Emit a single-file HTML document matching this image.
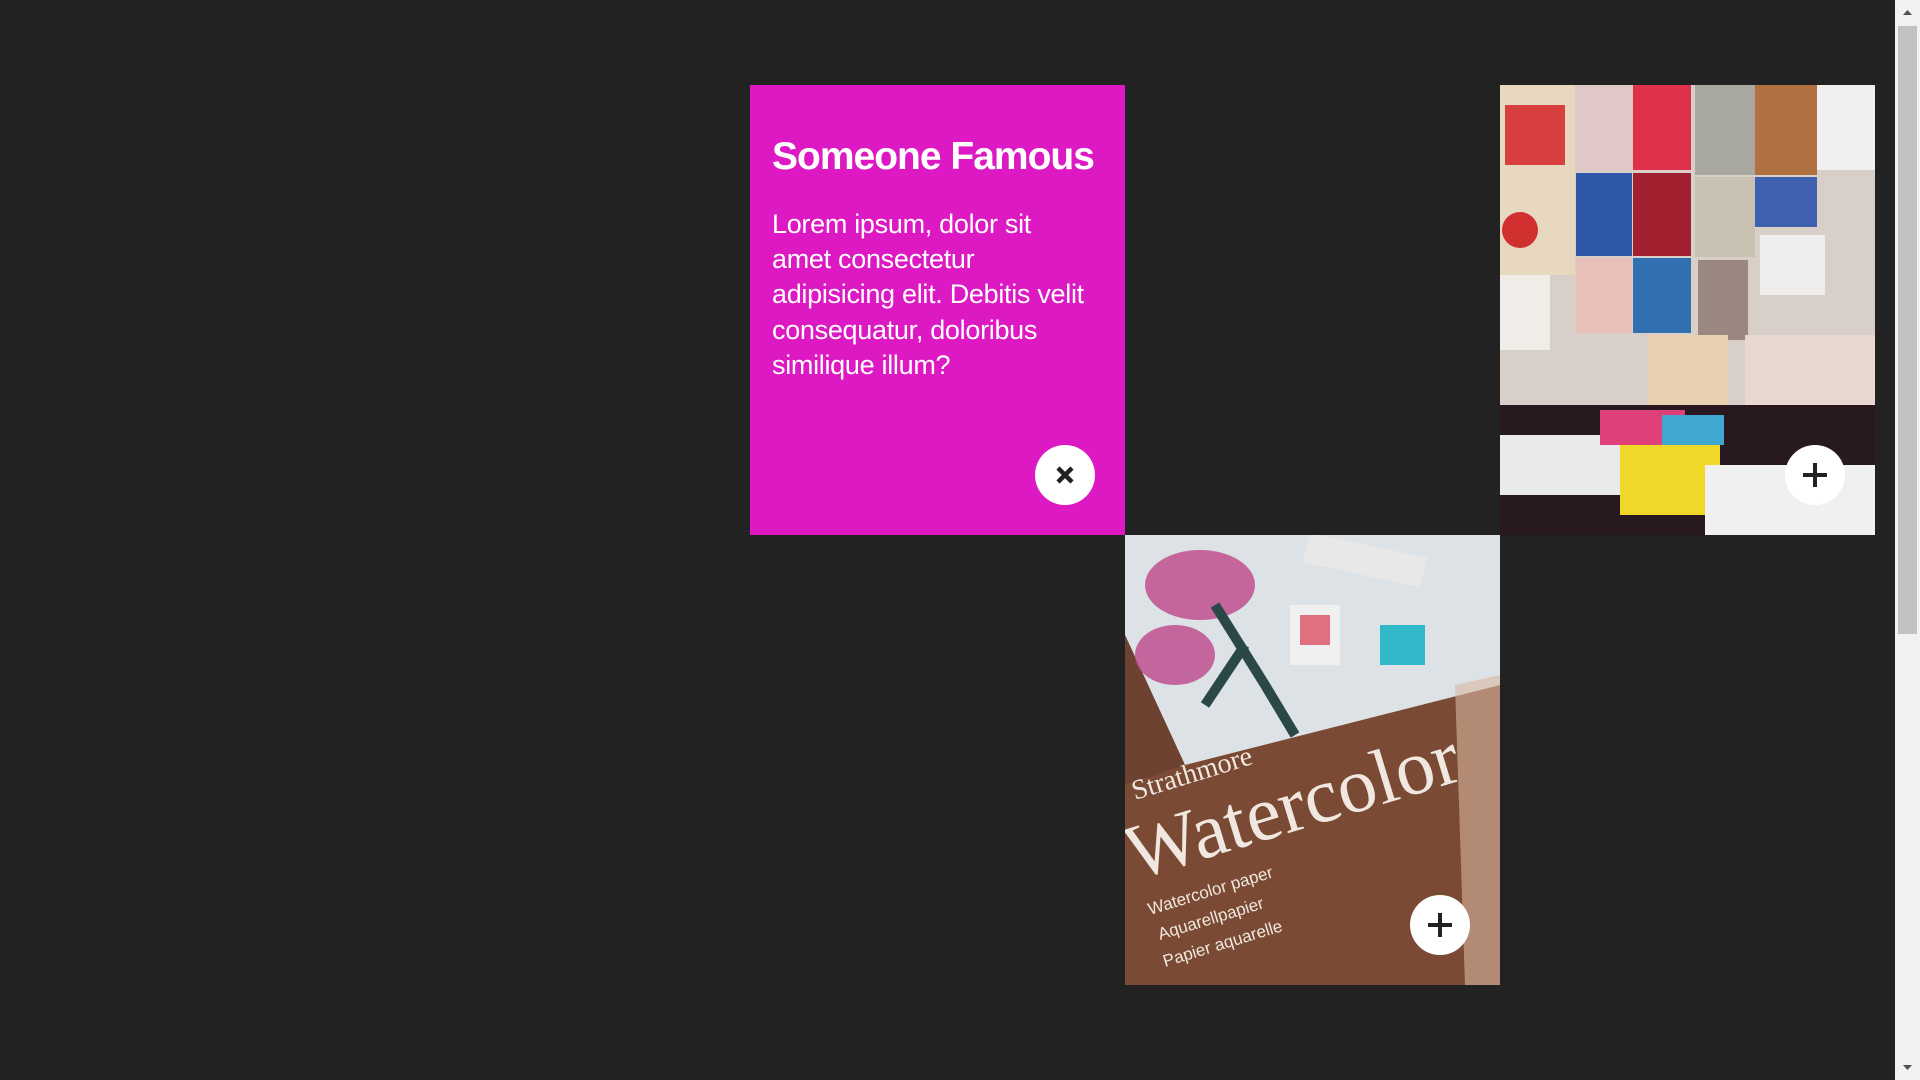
<!DOCTYPE html>
<html><head><style>
html,body{margin:0;padding:0;width:1920px;height:1080px;overflow:hidden;background:#222;font-family:"Liberation Sans",sans-serif}
.abs{position:absolute}
.card{left:750px;top:85px;width:375px;height:450px;background:#dc19c2;color:#fff}
.card h1{position:absolute;left:22px;top:50px;margin:0;font-size:39px;font-weight:bold;letter-spacing:-1px}
.card p{position:absolute;left:22px;top:122px;margin:0;font-size:27px;line-height:35.2px;letter-spacing:-0.3px;white-space:nowrap}
.btn{width:60px;height:60px;border-radius:50%;background:#fff}
.scroll{left:1895px;top:0;width:25px;height:1080px;background:#f1f1f1}
.thumb{left:1898px;top:26px;width:19px;height:608px;background:#c1c1c1}
</style></head><body>
<div class="abs card">
<h1>Someone Famous</h1>
<p>Lorem ipsum, dolor sit<br>amet consectetur<br>adipisicing elit. Debitis velit<br>consequatur, doloribus<br>similique illum?</p>
<div class="abs btn" style="left:285px;top:360px"><svg width="60" height="60"><path d="M23 23L37 37M37 23L23 37" stroke="#222" stroke-width="4.5"/></svg></div>
</div>
<div class="abs" style="left:1500px;top:85px;width:375px;height:450px;overflow:hidden;background:#d8d0c8">
<svg width="375" height="450">
<rect x="0" y="0" width="75" height="190" fill="#e8d8c0"/>
<rect x="5" y="20" width="60" height="60" fill="#d84040"/>
<circle cx="20" cy="145" r="18" fill="#d03030"/>
<rect x="75" y="0" width="58" height="85" fill="#e0c8c8"/>
<rect x="133" y="0" width="58" height="85" fill="#e0304a"/>
<rect x="195" y="0" width="60" height="90" fill="#a8a8a0"/>
<rect x="255" y="0" width="62" height="90" fill="#b07040"/>
<rect x="317" y="0" width="58" height="85" fill="#f2f0ee"/>
<rect x="76" y="88" width="56" height="83" fill="#3058a8"/>
<rect x="133" y="88" width="58" height="83" fill="#a02030"/>
<rect x="195" y="92" width="60" height="80" fill="#c8c0b0"/>
<rect x="255" y="92" width="62" height="50" fill="#4060b0"/>
<rect x="76" y="173" width="56" height="75" fill="#e8c0b8"/>
<rect x="133" y="173" width="58" height="75" fill="#3070b0"/>
<rect x="198" y="175" width="50" height="80" fill="#9a8880"/>
<rect x="0" y="190" width="50" height="75" fill="#f0ece8"/>
<rect x="260" y="150" width="65" height="60" fill="#f0eeec"/>
<rect x="245" y="250" width="130" height="120" fill="#e8d8d0"/>
<rect x="148" y="250" width="80" height="75" fill="#e8d0b0"/>
<rect x="0" y="320" width="375" height="130" fill="#281820"/>
<rect x="0" y="350" width="140" height="60" fill="#eaeaea"/>
<rect x="100" y="325" width="85" height="35" fill="#e0407a"/>
<rect x="162" y="330" width="62" height="30" fill="#40a8d0"/>
<rect x="120" y="360" width="100" height="70" fill="#f0d828"/>
<rect x="205" y="380" width="170" height="70" fill="#f0f0f0"/>
</svg>
<div class="abs btn" style="left:285px;top:360px"><svg width="60" height="60"><path d="M30 18V42M18 30H42" stroke="#222" stroke-width="4"/></svg></div>
</div>
<div class="abs" style="left:1125px;top:535px;width:375px;height:450px;overflow:hidden;background:#7a4a34">
<svg width="375" height="450">
<polygon points="0,0 375,0 375,150 60,230 0,100" fill="#dde2e6"/>
<polygon points="0,100 60,230 0,250" fill="#6e4230"/>
<g fill="#c05090" opacity=".85"><ellipse cx="75" cy="50" rx="55" ry="35"/><ellipse cx="50" cy="120" rx="40" ry="30"/></g>
<path d="M90 70L140 150L170 200M120 110L80 170" stroke="#2a4848" stroke-width="10" fill="none"/>
<rect x="180" y="10" width="120" height="30" fill="#e8e8e8" transform="rotate(12 240 25)"/>
<rect x="165" y="70" width="50" height="60" fill="#f0f0f0"/>
<rect x="175" y="80" width="30" height="30" fill="#e07080"/>
<rect x="255" y="90" width="45" height="40" fill="#30b8c8"/>
<text x="10" y="345" font-family="Liberation Serif" font-size="78" fill="#f0e8e0" transform="rotate(-17 10 345)">Watercolor</text>
<text x="10" y="265" font-family="Liberation Serif" font-size="28" fill="#f0e8e0" transform="rotate(-17 10 265)">Strathmore</text>
<g font-size="17" fill="#f0e8e0" font-family="Liberation Sans"><text x="25" y="380" transform="rotate(-17 25 380)">Watercolor paper</text><text x="35" y="405" transform="rotate(-17 35 405)">Aquarellpapier</text><text x="40" y="432" transform="rotate(-17 40 432)">Papier aquarelle</text></g>
<polygon points="330,150 375,140 375,450 340,450" fill="#d8b8a0" opacity=".6"/>
</svg>
<div class="abs btn" style="left:285px;top:360px"><svg width="60" height="60"><path d="M30 18V42M18 30H42" stroke="#222" stroke-width="4"/></svg></div>
</div>
<div class="abs scroll"></div>
<div class="abs thumb"></div>
<svg class="abs" style="left:1895px;top:0" width="25" height="1080"><path d="M8 15L12.5 10L17 15Z" fill="#505050"/><path d="M8 1065L12.5 1070L17 1065Z" fill="#505050"/></svg>
</body></html>
